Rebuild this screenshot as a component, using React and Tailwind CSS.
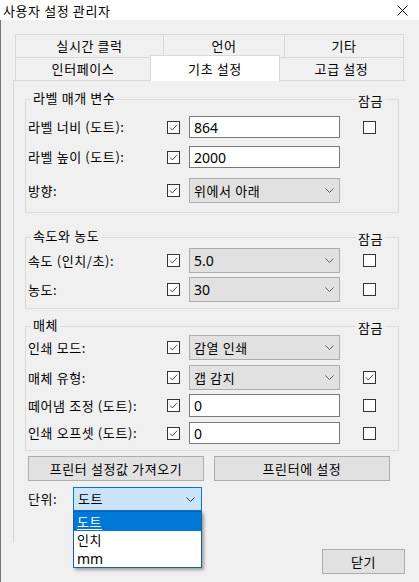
import React from "react";

function Cb({ checked }) {
  return (
    <span className="w-[13px] h-[13px] border border-[#333333] bg-white flex items-center justify-center shrink-0">
      {checked && (
        <svg width="11" height="11" viewBox="0 0 11 11">
          <path d="M2 5.5 L4.3 8 L9 2.8" stroke="#555" strokeWidth="1" fill="none" />
        </svg>
      )}
    </span>
  );
}

function Chevron({ color = "#606060" }) {
  return (
    <svg width="9" height="5" viewBox="0 0 9 5" className="shrink-0">
      <path d="M0.5 0.5 L4.5 4.5 L8.5 0.5" stroke={color} strokeWidth="1" fill="none" />
    </svg>
  );
}

function Field({ kind, value, digits }) {
  const size = digits
    ? "text-[14px] tracking-normal font-['Noto_Sans','Noto_Sans_CJK_KR',sans-serif]"
    : "text-[13px]";
  if (kind === "input") {
    return (
      <div className={`w-[151px] h-full border border-[#7a7a7a] bg-white flex items-center pl-[4px] ${size}`}>
        {value}
      </div>
    );
  }
  return (
    <div className={`w-[151px] h-full border border-[#adadad] bg-[#e1e1e1] flex items-center pl-[4px] pr-[5px] ${size}`}>
      <span className="flex-1">{value}</span>
      <Chevron />
    </div>
  );
}

function Row({ label, kind, value, digits, lock, h, mt }) {
  return (
    <div className={`flex items-center ${h} ${mt}`}>
      <span className="w-[141px] pl-[2px] whitespace-nowrap">{label}</span>
      <Cb checked />
      <div className="ml-[9px] h-full">
        <Field kind={kind} value={value} digits={digits} />
      </div>
      {lock !== undefined && (
        <div className="ml-[23px]">
          <Cb checked={lock} />
        </div>
      )}
    </div>
  );
}

function GroupHeader({ title }) {
  return (
    <div className="flex items-start h-[16px] -mt-[9px]">
      <span className="ml-[5px] px-[2px] bg-[#f0f0f0] leading-[14px]">{title}</span>
      <span className="ml-auto mr-[13px] px-[2px] bg-[#f0f0f0] leading-[14px] mt-[3px]">잠금</span>
    </div>
  );
}

function Tab({ children, className }) {
  return (
    <div className={`flex items-center justify-center border-t border-l border-r border-[#d9d9d9] bg-[#f0f0f0] ${className}`}>
      {children}
    </div>
  );
}

function Btn({ children, className }) {
  return (
    <div className={`border border-[#adadad] bg-[#e1e1e1] flex items-center justify-center ${className}`}>
      {children}
    </div>
  );
}

export default function App() {
  return (
    <div className="w-[419px] h-[582px] bg-[#f0f0f0] text-black text-[13px] tracking-[0.6px] font-['Noto_Sans_CJK_KR',sans-serif] overflow-hidden">
      <div className="h-[20px] bg-white flex items-center justify-between">
        <span className="pl-[3px] leading-none">사용자 설정 관리자</span>
        <svg width="11" height="11" viewBox="0 0 11 11" className="mr-[11px]">
          <path d="M0.5 0.5 L10.5 10.5 M10.5 0.5 L0.5 10.5" stroke="#000" strokeWidth="1" />
        </svg>
      </div>
      <div className="border-l border-[#767676] h-[562px]">
        <div className="pt-[14px] ml-[14px]">
          <div className="flex h-[23px]">
            <Tab className="w-[149px]">실시간 클럭</Tab>
            <Tab className="w-[122px] -ml-px">언어</Tab>
            <Tab className="w-[120px] -ml-px">기타</Tab>
          </div>
          <div className="flex items-end h-[23px]">
            <Tab className="w-[136px] h-[23px]">인터페이스</Tab>
            <div className="w-[130px] h-[26px] -ml-px -mb-px relative z-10 bg-white border-t border-l border-r border-[#d9d9d9] flex items-center justify-center">
              기초 설정
            </div>
            <Tab className="w-[125px] h-[23px] -ml-px">고급 설정</Tab>
          </div>
        </div>
        <div className="ml-[12px] w-[393px] h-[463px] border-l border-t border-[#d9d9d9] pl-[11px] pt-[18px] relative">
          <div className="w-[374px] border border-[#dcdcdc] pb-[9px]">
            <GroupHeader title="라벨 매개 변수" />
            <Row label="라벨 너비 (도트):" kind="input" value="864" digits lock={false} h="h-[22px]" mt="mt-[9px]" />
            <Row label="라벨 높이 (도트):" kind="input" value="2000" digits h="h-[22px]" mt="mt-[8px]" />
            <Row label="방향:" kind="select" value="위에서 아래" h="h-[25px]" mt="mt-[10px]" />
          </div>
          <div className="w-[374px] border border-[#dcdcdc] pb-[6px] mt-[24px]">
            <GroupHeader title="속도와 농도" />
            <Row label="속도 (인치/초):" kind="select" value="5.0" digits lock={false} h="h-[25px]" mt="mt-[3px]" />
            <Row label="농도:" kind="select" value="30" digits lock={false} h="h-[25px]" mt="mt-[4px]" />
          </div>
          <div className="w-[374px] border border-[#dcdcdc] pb-[6px] mt-[17px]">
            <GroupHeader title="매체" />
            <Row label="인쇄 모드:" kind="select" value="감열 인쇄" h="h-[25px]" mt="mt-[1px]" />
            <Row label="매체 유형:" kind="select" value="갭 감지" lock={true} h="h-[25px]" mt="mt-[5px]" />
            <Row label="떼어냄 조정 (도트):" kind="input" value="0" digits lock={false} h="h-[23px]" mt="mt-[4px]" />
            <Row label="인쇄 오프셋 (도트):" kind="input" value="0" digits lock={false} h="h-[22px]" mt="mt-[5px]" />
          </div>
          <div className="flex ml-[3px] mt-[5px] gap-[10px]">
            <Btn className="w-[176px] h-[25px]">프린터 설정값 가져오기</Btn>
            <Btn className="w-[176px] h-[25px]">프린터에 설정</Btn>
          </div>
          <div className="flex items-center ml-[3px] mt-[6px] h-[24px]">
            <span className="w-[45px]">단위:</span>
            <div className="relative w-[129px] h-full">
              <div className="w-full h-full border border-[#0078d7] bg-[#cce4f7] flex items-center pl-[4px] pr-[6px]">
                <span className="flex-1">도트</span>
                <Chevron color="#333" />
              </div>
              <div className="absolute left-0 top-full w-[129px] h-[57px] border border-[#1a5fa8] bg-white shadow-[2px_2px_3px_rgba(0,0,0,0.35)] z-20">
                <div className="h-[19px] bg-[#0078d7] text-white flex items-center pl-[3px]">
                  <span className="underline underline-offset-2">도트</span>
                </div>
                <div className="h-[18px] flex items-center pl-[3px]">인치</div>
                <div className="h-[18px] flex items-center pl-[3px] font-['Noto_Sans',sans-serif] text-[14px] tracking-normal">mm</div>
              </div>
            </div>
          </div>
        </div>
        <div className="flex justify-end mt-[6px] mr-[14px]">
          <Btn className="w-[83px] h-[25px]">닫기</Btn>
        </div>
      </div>
    </div>
  );
}
